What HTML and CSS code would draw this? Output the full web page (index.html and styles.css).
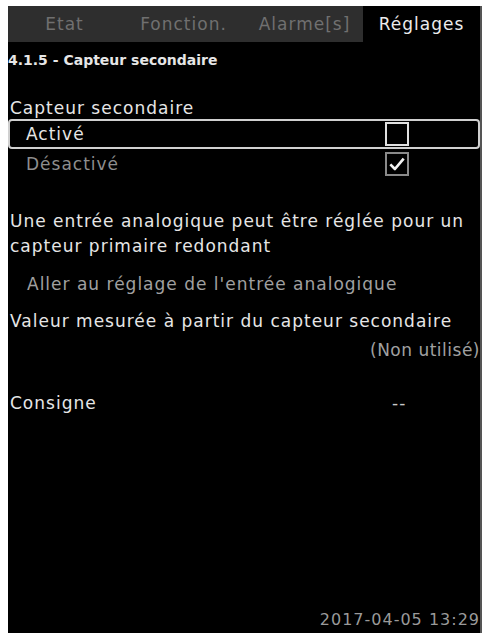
FILE: index.html
```html
<!DOCTYPE html>
<html lang="fr">
<head>
<meta charset="utf-8">
<title>Capteur secondaire</title>
<link rel="stylesheet" href="styles.css">
</head>
<body>
<div class="screen">
  <div class="tabs">
    <div class="tab t1">Etat</div>
    <div class="tab t2">Fonction.</div>
    <div class="tab t3">Alarme[s]</div>
    <div class="tab active">Réglages</div>
  </div>
  <div class="crumb">4.1.5 - Capteur secondaire</div>
  <div class="title">Capteur secondaire</div>
  <div class="option selected">
    <span class="opt-label">Activé</span>
    <span class="box"></span>
  </div>
  <div class="option dim">
    <span class="opt-label">Désactivé</span>
    <span class="box checked">
      <svg viewBox="0 0 24 24" width="20" height="20"><path d="M4 12.5 L9.5 18 L20 5.5" fill="none" stroke="#f2f2f2" stroke-width="3.2" stroke-linejoin="round"/></svg>
    </span>
  </div>
  <div class="para">Une entrée analogique peut être réglée pour un<br>capteur primaire redondant</div>
  <div class="link">Aller au réglage de l'entrée analogique</div>
  <div class="measure">Valeur mesurée à partir du capteur secondaire</div>
  <div class="value-right">(Non utilisé)</div>
  <div class="setpoint">
    <span>Consigne</span>
    <span class="dash">--</span>
  </div>
  <div class="spacer"></div>
  <div class="date">2017-04-05 13:29</div>
</div>
</body>
</html>
```
FILE: styles.css
```css
html, body {
  margin: 0;
  padding: 0;
  background: #ffffff;
}
body {
  font-family: "DejaVu Sans", sans-serif;
  letter-spacing: 1px;
}
.screen {
  margin: 6px 0 0 8px;
  width: 474px;
  height: 627px;
  background: #000;
  color: #e6e6e6;
  display: flex;
  flex-direction: column;
  box-sizing: border-box;
  border-right: 2px solid #555;
}
.tabs {
  display: flex;
  height: 36px;
  flex: none;
}
.tab {
  background: #2e2e2e;
  color: #707070;
  font-size: 17px;
  line-height: 36px;
  text-align: center;
}
.t1 { width: 113px; }
.t2 { width: 125px; }
.t3 { width: 117px; }
.tab.active {
  background: #000;
  color: #ececec;
  flex: 1;
}
.crumb {
  font-size: 14px;
  font-weight: bold;
  letter-spacing: 0;
  line-height: 18px;
  margin-top: 9px;
  padding-left: 0;
}
.title {
  font-size: 17px;
  line-height: 22px;
  margin-top: 28px;
  padding-left: 2px;
}
.option {
  display: flex;
  align-items: center;
  height: 30px;
  box-sizing: border-box;
  padding-left: 18px;
  font-size: 17px;
}
.option.selected {
  border: 2px solid #d0d0d0;
  border-radius: 4px;
  padding-left: 16px;
}
.option.dim {
  color: #8e8e8e;
}
.opt-label {
  width: 359px;
}
.box {
  width: 24px;
  height: 24px;
  box-sizing: border-box;
  border: 2px solid #e0e0e0;
  display: flex;
  align-items: center;
  justify-content: center;
}
.box.checked {
  border-color: #8a8a8a;
}
.para {
  font-size: 17px;
  line-height: 25px;
  margin-top: 30px;
  padding-left: 2px;
}
.link {
  font-size: 17px;
  line-height: 24px;
  margin-top: 13px;
  padding-left: 19px;
  color: #a0a0a0;
}
.measure {
  font-size: 17px;
  line-height: 24px;
  margin-top: 13px;
  padding-left: 2px;
}
.value-right {
  font-size: 17px;
  line-height: 24px;
  margin-top: 5px;
  text-align: right;
  color: #a0a0a0;
  letter-spacing: 0.5px;
}
.setpoint {
  display: flex;
  font-size: 17px;
  line-height: 24px;
  margin-top: 29px;
  padding-left: 2px;
}
.setpoint span:first-child {
  width: 382px;
}
.dash {
  color: #c8c8c8;
}
.spacer {
  flex: 1;
}
.date {
  font-size: 16px;
  line-height: 24px;
  text-align: right;
  color: #9a9a9a;
  margin-bottom: 1px;
}
```
